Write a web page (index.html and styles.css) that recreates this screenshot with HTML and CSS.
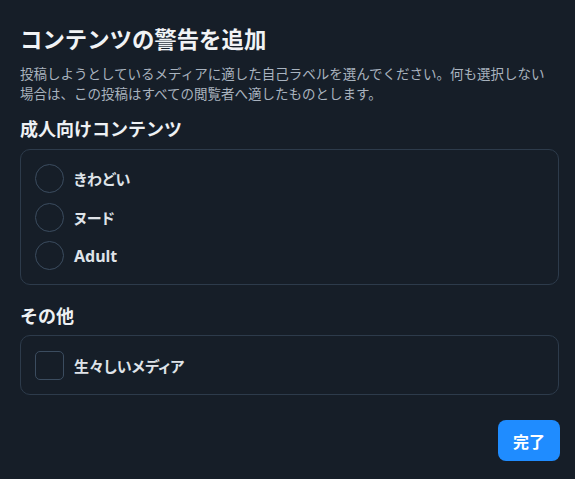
FILE: index.html
```html
<!DOCTYPE html>
<html lang="ja">
<head>
<meta charset="utf-8">
<link rel="stylesheet" href="styles.css">
</head>
<body>
<div class="dialog">
  <h1 class="title">コンテンツの警告を追加</h1>
  <p class="desc">投稿しようとしているメディアに適した自己ラベルを選んでください。何も選択しない<br>場合は、この投稿はすべての閲覧者へ適したものとします。</p>
  <h2 class="section">成人向けコンテンツ</h2>
  <div class="box">
    <div class="row"><span class="radio"></span><span class="label">きわどい</span></div>
    <div class="row"><span class="radio"></span><span class="label">ヌード</span></div>
    <div class="row"><span class="radio"></span><span class="label latin">Adult</span></div>
  </div>
  <h2 class="section section-other">その他</h2>
  <div class="box box-other">
    <div class="row"><span class="check"></span><span class="label">生々しいメディア</span></div>
  </div>
  <div class="actions">
    <button class="done">完了</button>
  </div>
</div>
</body>
</html>
```

FILE: styles.css
```css
html, body {
  margin: 0;
  padding: 0;
  background: #161e28;
}
body {
  font-family: "Noto Sans CJK JP", "Noto Sans", sans-serif;
  color: #eef1f4;
}
.dialog {
  padding: 24px 16px 0 20px;
}
.title {
  margin: 0;
  font-size: 22.4px;
  line-height: 28px;
  font-weight: 700;
  color: #f1f3f5;
}
.desc {
  margin: 11px 0 0;
  font-size: 13.5px;
  line-height: 20px;
  color: #a9b3bf;
  white-space: nowrap;
}
.section {
  margin: 13px 0 9px;
  font-size: 18px;
  line-height: 24px;
  font-weight: 700;
  color: #eef1f4;
}
.section-other {
  margin-top: 18px;
  margin-bottom: 8px;
}
.box {
  border: 1px solid #2d3b4b;
  border-radius: 10px;
  padding: 14px;
  display: flex;
  flex-direction: column;
  gap: 9.5px;
}
.box-other {
  padding: 15px 14px 14px;
}
.row {
  display: flex;
  align-items: center;
  gap: 10px;
  height: 29px;
}
.radio, .check {
  box-sizing: border-box;
  width: 29px;
  height: 29px;
  border: 1.5px solid #3b4c5f;
  flex: none;
}
.radio {
  border-radius: 50%;
}
.check {
  border-radius: 5px;
}
.label {
  font-size: 15px;
  font-weight: 700;
  color: #dfe3e8;
  font-feature-settings: "palt";
}
.latin {
  font-family: "Noto Sans", "Noto Sans CJK JP", sans-serif;
  font-size: 16px;
}
.actions {
  display: flex;
  justify-content: flex-end;
  margin-top: 25px;
  margin-right: -1px;
}
.done {
  width: 62px;
  height: 41px;
  border: none;
  border-radius: 8px;
  background: #1f8cff;
  color: #ffffff;
  font-family: "Noto Sans CJK JP", sans-serif;
  font-size: 16px;
  font-weight: 700;
  padding: 0;
}
```
